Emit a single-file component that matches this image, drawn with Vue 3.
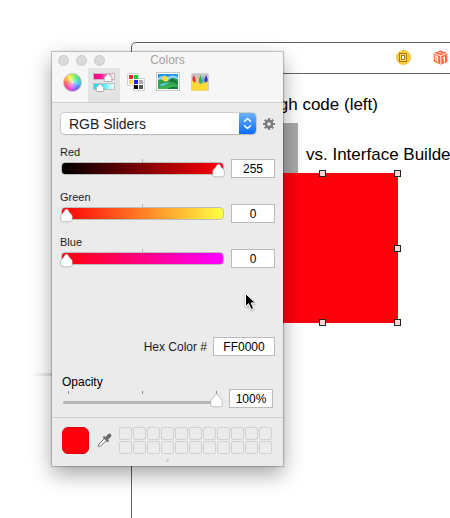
<script setup>
import { ref } from 'vue'

const channels = ref([
  { id: 'red', name: 'Red', value: 255 },
  { id: 'green', name: 'Green', value: 0 },
  { id: 'blue', name: 'Blue', value: 0 }
])
const hex = ref('FF0000')
const opacity = ref(100)
const handles = ['nw', 'n', 'ne', 'w', 'e', 'sw', 's', 'se']
</script>

<template>
  <main class="desktop">
    <div class="guide"></div>
    <section class="scene">
      <div class="scene-bar">
        <svg width="15" height="15" viewBox="0 0 15 15" aria-hidden="true">
          <circle cx="7.5" cy="7.5" r="7" fill="#fdcb36" stroke="#f3b72a" stroke-width=".8" />
          <rect x="3.5" y="3.5" width="7" height="8" fill="#fbd565" stroke="#a07d1c" />
          <rect x="5.500" y="5.500" width="3" height="4" fill="#fff" stroke="#a07d1c" />
        </svg>
        <svg width="15" height="15" viewBox="0 0 15 15" aria-hidden="true">
          <path d="M7.600.5 14.300 3v9L7.500 14.700.700 11.300V3z" fill="#fa6a41" />
          <path d="M1 3.400 7.800 5.800 14 3.200M7.800 5.800v8.600" fill="none" stroke="#fff" stroke-width=".9" />
          <path d="M5 2.700h3M8.500 3.300h2" stroke="#ffc9b8" />
          <path d="M2.500 6v3.500l2 .8V6.800zM4.500 8v4M10 8.200l1.300-.8v4.800" fill="none" stroke="#fff" stroke-width="1.200" />
        </svg>
      </div>
    </section>
    <p class="caption code">through code (left)</p>
    <div class="code-box"></div>
    <p class="caption builder">vs. Interface Builder</p>
    <div class="builder-box">
      <span v-for="h in handles" :key="h" class="handle" :class="h"></span>
    </div>

    <section class="panel">
      <header class="head">
        <div class="title-bar">
          <div class="lights"><i></i><i></i><i></i></div>
          <h1>Colors</h1>
        </div>
        <nav class="tabs">
          <button type="button" aria-label="Color Wheel"><span class="wheel"></span></button>
          <button type="button" class="active" aria-label="Color Sliders">
            <svg width="22" height="20" viewBox="0 0 22 20">
              <defs>
                <linearGradient id="pink"><stop offset="0" stop-color="#f0047f" /><stop offset=".4" stop-color="#fb1c9b" /><stop offset="1" stop-color="#fff" /></linearGradient>
                <linearGradient id="cyan"><stop offset="0" stop-color="#00e4fa" /><stop offset=".4" stop-color="#32eaff" /><stop offset="1" stop-color="#fff" /></linearGradient>
              </defs>
              <rect x=".5" y="1.500" width="21" height="6" fill="url(#pink)" stroke="#c4b8bf" />
              <rect x=".5" y="11.500" width="21" height="6" fill="url(#cyan)" stroke="#b9c4c6" />
              <path d="M15 1.500 18.800 5.500v3q0 1-1 1h-5.600q-1 0-1-1v-3z" fill="#fff" stroke="#999" stroke-width=".8" />
              <path d="M7 11.500 10.800 15.500v3q0 1-1 1H4.200q-1 0-1-1v-3z" fill="#fff" stroke="#999" stroke-width=".8" />
            </svg>
          </button>
          <button type="button" aria-label="Color Palettes">
            <svg width="18" height="18" viewBox="0 0 18 18">
              <path d="M.5.5h11v5h6v12h-11v-5h-6z" fill="#fff" stroke="#d2d2d2" />
              <path d="M2 2h4v4H2z" fill="#f5222c" /><path d="M7 2h4v4H7z" fill="#1cc72b" />
              <path d="M2 7h4v4H2z" fill="#ffd84d" /><path d="M7 7h4v4H7z" fill="#1f20e8" />
              <path d="M12 7h4v4h-4z" fill="#aaa" /><path d="M7 12h4v4H7z" fill="#000" /><path d="M12 12h4v4h-4z" fill="#555" />
              <path d="M8 12.500h3" stroke="#222" />
            </svg>
          </button>
          <button type="button" aria-label="Image Palettes">
            <svg width="24" height="20" viewBox="0 0 24 20">
              <rect x=".5" y=".5" width="23" height="18" fill="#fff" stroke="#c9c9c9" />
              <path d="M2 2h20v15H2z" fill="#2795ea" />
              <path d="M2 6q5-4 9-1 6-3 11 0v4H2z" fill="#8ed1f7" />
              <circle cx="9" cy="7" r="3" fill="#ffdf30" />
              <path d="M2 8.500q3-2 6 .5 4 2 6-1t4-2l4 1.500V17H2z" fill="#2d9f4d" />
              <path d="M12 9q3-4 6-2l4 3v2z" fill="#157d38" />
              <path d="M3 13q6-3 11-1.500-5 .5-7 2.500z" fill="#69c9ee" />
              <path d="M2 16q8-5 20-3v4H2z" fill="#39b453" />
              <path d="M12 17q2-3 10-2v2z" fill="#147b46" />
            </svg>
          </button>
          <button type="button" aria-label="Pencils">
            <svg width="18" height="19" viewBox="0 0 18 19">
              <rect x=".5" y=".5" width="17" height="17" rx="1" fill="#c5c5c5" stroke="#cfcfcf" />
              <path d="M1 6.500 3.500 9 6 8l2.500 3L11 10l3-1 3-3v11.500H1z" fill="#ffda35" />
              <path d="M3 2 4.600 6v3L3 9.500 1.500 7V5z" fill="#e53a35" />
              <path d="M6.500 3 8 7v3l-1.500 1L5 9V7z" fill="#f3c49b" />
              <path d="M9.500 2 11 6v4l-1.500 1L8 9.500V6z" fill="#36b34b" />
              <path d="M12.300 3l1.400 4v2.500l-1.500.8L11 9V7z" fill="#68a9db" />
              <path d="M15 2l1.600 4v2L15 9.500 13.500 8V6z" fill="#3a31d0" />
            </svg>
          </button>
        </nav>
      </header>

      <div class="body">
        <div class="mode">
          <div class="picker">
            <select aria-label="Slider mode">
              <option>RGB Sliders</option>
            </select>
            <span class="cap">
              <svg width="9" height="13" viewBox="0 0 9 13">
                <path d="M1.500 4.300 4.500 1.500l3 2.800M1.500 8.700l3 2.800 3-2.800" fill="none" stroke="#fff" stroke-width="1.500" stroke-linecap="round" stroke-linejoin="round" />
              </svg>
            </span>
          </div>
          <button type="button" class="gear" aria-label="Options">
            <svg width="12" height="12" viewBox="-6 -6 12 12">
              <g stroke="#7b7b7b" stroke-width="2.200">
                <path d="M0-6V-3M0 6V3M-6 0H-3M6 0H3M-4.200-4.200l2 2M4.200 4.200l-2-2M-4.200 4.200l2-2M4.200-4.200l-2 2" />
              </g>
              <circle r="3" fill="none" stroke="#7b7b7b" stroke-width="2.400" />
            </svg>
          </button>
        </div>

        <div v-for="c in channels" :key="c.id" class="channel">
          <label :for="c.id">{{ c.name }}</label>
          <div class="control">
            <div class="slider">
              <span class="tick"></span>
              <span class="ramp" :class="c.id"></span>
              <input :id="c.id" v-model="c.value" type="range" min="0" max="255" />
            </div>
            <input v-model="c.value" class="value" type="text" :aria-label="c.name + ' value'" />
          </div>
        </div>

        <div class="hex">
          <label for="hex">Hex Color #</label>
          <input id="hex" v-model="hex" class="value wide" type="text" />
        </div>

        <div class="opacity">
          <label for="opacity">Opacity</label>
          <div class="control">
            <div class="slider">
              <span class="ticks"><i></i><i></i><i></i></span>
              <span class="rail"></span>
              <input id="opacity" v-model="opacity" type="range" min="0" max="100" />
            </div>
            <input class="value" type="text" :value="opacity + '%'" aria-label="Opacity value" />
          </div>
        </div>
      </div>

      <footer class="foot">
        <div class="wells">
          <span class="current"></span>
          <button type="button" class="dropper" aria-label="Pick a color">
            <svg width="15" height="15" viewBox="0 0 15 15">
              <path d="M7.500 5.500 2 11q-.8 1-.8 2.600Q3 13.500 4 12.700L9.500 7.500" fill="#f4f4f4" stroke="#7a7a7a" stroke-width="1" />
              <path d="M5.600 4.200 7.200 2.900 8.300 4 11 1.200Q12.500 0 13.900 1.100 15 2.500 13.800 4L11 6.700l1.100 1.100-1.400 1.600z" fill="#6d6d6d" />
            </svg>
          </button>
          <div class="cells"><i v-for="n in 22" :key="n"></i></div>
        </div>
        <span class="grip"></span>
      </footer>
    </section>

    <svg class="pointer" width="14" height="20" viewBox="0 0 14 20" aria-hidden="true">
      <path d="M1.500 1.500v13l3.100-2.800 2.500 5.800 2.500-1.100-2.400-5.500h4.300z" fill="#000" stroke="#fff" stroke-width="1" />
    </svg>
  </main>
</template>

<style>
body {
  margin: 0;
  background: #fff;
}
</style>

<style scoped>
* {
  box-sizing: border-box;
}
.desktop {
  position: relative;
  min-height: 100vh;
  overflow: hidden;
  background: #fff;
  color: #1c1c1c;
  font-family: "Liberation Sans", Arial, sans-serif;
  font-size: 12px;
}
button {
  display: flex;
  align-items: center;
  justify-content: center;
  padding: 0;
  border: 0;
  background: none;
}
svg {
  display: block;
}

/* canvas behind the panel */
.guide {
  position: absolute;
  top: 373px;
  left: 32px;
  width: 24px;
  height: 3px;
  background: linear-gradient(90deg, #fff, #d4d4d4);
}
.scene {
  position: absolute;
  top: 42px;
  right: -8px;
  bottom: -8px;
  left: 131px;
  border: 1px solid #626262;
  border-radius: 5px;
}
.scene-bar {
  display: flex;
  align-items: center;
  justify-content: flex-end;
  gap: 22px;
  height: 31px;
  padding: 0 9px 1px 0;
  border-bottom: 1px solid #626262;
}
.caption {
  position: absolute;
  margin: 0;
  color: #000;
  font-size: 17px;
  line-height: 20px;
  white-space: nowrap;
}
.code {
  top: 95px;
  left: 240px;
}
.builder {
  top: 145px;
  left: 306px;
}
.code-box {
  position: absolute;
  top: 123px;
  left: 248px;
  width: 50px;
  height: 50px;
  background: #a9a9a9;
}
.builder-box {
  position: absolute;
  top: 173px;
  left: 248px;
  width: 150px;
  height: 150px;
  background: #ff000d;
}
.handle {
  position: absolute;
  width: 7px;
  height: 7px;
  border: 1px solid #222;
  background: #fff;
}
.n, .s { left: 71px; }
.nw, .w, .sw { left: -4px; }
.ne, .e, .se { right: -3px; }
.nw, .n, .ne { top: -3px; }
.w, .e { top: 72px; }
.sw, .s, .se { bottom: -3px; }
.n, .ne, .s, .se, .e { background: #ffd5d8; }

/* panel */
.panel {
  position: absolute;
  top: 52px;
  left: 52px;
  width: 231px;
  background: #ebebeb;
  box-shadow: 0 0 1px 1px rgba(0, 0, 0, 0.2), 0 8px 20px rgba(0, 0, 0, 0.36);
}
.head {
  border-bottom: 1px solid #d0d0d0;
  background: #f6f6f6;
}
.title-bar {
  display: grid;
  align-items: center;
  height: 16px;
}
.title-bar > * {
  grid-area: 1 / 1;
}
.lights {
  display: flex;
  gap: 7px;
  padding-left: 6px;
}
.lights i {
  width: 11px;
  height: 11px;
  border: 1px solid #cbcbcb;
  border-radius: 50%;
  background: #dadada;
}
h1 {
  margin: 0;
  color: #a3a3a3;
  font-size: 12px;
  font-weight: 400;
  line-height: 16px;
  text-align: center;
}
.tabs {
  display: flex;
  padding-left: 4px;
}
.tabs button {
  width: 32px;
  height: 34px;
  padding-bottom: 6px;
}
.tabs .active {
  background: #e4e4e4;
}
.wheel {
  width: 19px;
  height: 19px;
  border: 1px solid #c2c2c2;
  border-radius: 50%;
  background:
    radial-gradient(circle, rgba(255, 255, 255, 0.7), rgba(255, 255, 255, 0) 65%),
    conic-gradient(#a8f542, #35e67a 45deg, #2cc8f6 95deg, #4b6bff 135deg, #d43cff 185deg, #ff3a9a 225deg, #ff5252 265deg, #ffa338 295deg, #f7ee3b 330deg, #a8f542);
}
.body {
  padding: 10px 8px 9px;
}
.mode {
  display: flex;
  align-items: center;
  gap: 7px;
  margin-bottom: 11px;
}
.picker {
  display: grid;
  flex: 1;
  margin-left: 1px;
  border-radius: 4px;
  background: #fff;
  box-shadow: 0 0 1px 1px rgba(0, 0, 0, 0.14), 0 1px 1px rgba(0, 0, 0, 0.1);
}
.picker > * {
  grid-area: 1 / 1;
}
select {
  width: 100%;
  height: 21px;
  padding: 0 24px 0 8px;
  border: 0;
  background: transparent;
  color: #1c1c1c;
  font-family: inherit;
  font-size: 14px;
  line-height: 20px;
  appearance: none;
}
.cap {
  display: flex;
  align-items: center;
  justify-content: center;
  justify-self: end;
  width: 17px;
  border-radius: 0 4px 4px 0;
  background: linear-gradient(#6bb3fa, #0a6dfb);
  pointer-events: none;
}
.gear {
  width: 12px;
  height: 12px;
}
label {
  display: block;
  line-height: 14px;
}
.channel {
  margin-bottom: 12px;
}
.channel label {
  font-size: 11px;
}
.control {
  display: flex;
  gap: 6px;
}
.slider {
  display: grid;
  flex: 1;
}
.slider > * {
  grid-area: 1 / 1;
}
.tick {
  justify-self: center;
  width: 1px;
  height: 4px;
  background: #b5b5b5;
}
.ramp {
  height: 13px;
  margin: 3px 1px 0;
  border: 1px solid #bdbdbd;
  border-radius: 4px;
}
.ramp.red {
  background: linear-gradient(90deg, #000, #ff0008);
}
.ramp.green {
  background: linear-gradient(90deg, #ff0008, #ffff45);
}
.ramp.blue {
  background: linear-gradient(90deg, #ff0008, #ff00ff);
}
input[type="range"] {
  width: 100%;
  height: 19px;
  margin: 0;
  background: transparent;
  appearance: none;
}
input[type="range"]::-webkit-slider-thumb {
  width: 13px;
  height: 15px;
  margin-top: 3px;
  border: 0;
  background: url("data:image/svg+xml,%3Csvg xmlns='http://www.w3.org/2000/svg' width='13' height='15'%3E%3Cpath d='M6.500 1Q7.500 1 8.500 2.800 9.500 4.800 11.200 6.200 12.300 7 12.300 8.500V11.500Q12.300 13.800 10 13.800H3Q.7 13.800.7 11.500V8.500Q.7 7 1.800 6.200 3.500 4.800 4.500 2.800 5.500 1 6.500 1Z' fill='%23fff' stroke='%23999' stroke-opacity='.75' stroke-width='.8'/%3E%3C/svg%3E");
  appearance: none;
}
.value {
  width: 44px;
  height: 19px;
  padding: 0;
  border: 1px solid #bcbcbc;
  background: #fff;
  color: #000;
  font-family: inherit;
  font-size: 12px;
  line-height: 17px;
  text-align: center;
}
.wide {
  width: 62px;
}
.hex {
  display: flex;
  align-items: center;
  justify-content: flex-end;
  gap: 6px;
  padding-top: 57px;
}
.opacity {
  padding: 19px 2px 0;
  color: #000;
}
.ticks {
  display: flex;
  justify-content: space-between;
  height: 3px;
  margin: 2px 6px 0;
}
.ticks i {
  width: 1px;
  background: #8d8d8d;
}
.rail {
  height: 3px;
  margin: 12px 1px 0;
  border-radius: 2px;
  background: #b5b5b5;
}
.foot {
  padding: 9px 11px 4px 10px;
  border-top: 1px solid #d0d0d0;
}
.wells {
  display: flex;
  align-items: center;
}
.current {
  width: 27px;
  height: 27px;
  border: 1px solid #e3000c;
  border-radius: 6px;
  background: #ff000d;
}
.dropper {
  width: 15px;
  margin: 0 7px 0 8px;
}
.cells {
  display: grid;
  flex: 1;
  grid-template-columns: repeat(11, 13px);
  grid-auto-rows: 13px;
  gap: 1px;
}
.cells i {
  border: 1px solid #d2d2d2;
  border-radius: 2px;
}
.grip {
  display: block;
  width: 3px;
  height: 3px;
  margin: 5px auto 0;
  border-radius: 50%;
  background: #ccc;
}
.pointer {
  position: absolute;
  top: 292px;
  left: 244px;
  filter: drop-shadow(0 1px 1px rgba(0, 0, 0, 0.3));
}
</style>
